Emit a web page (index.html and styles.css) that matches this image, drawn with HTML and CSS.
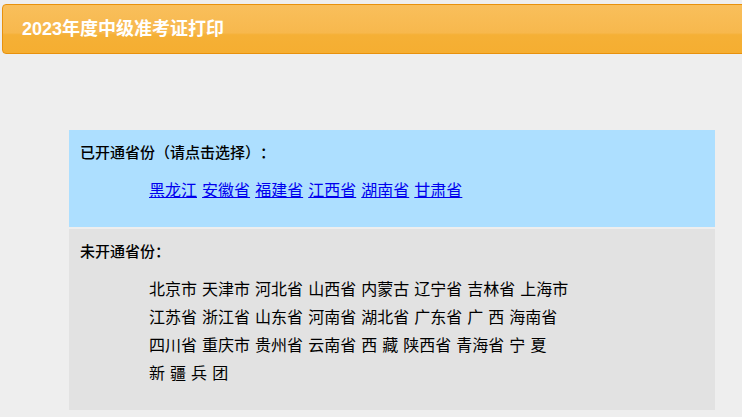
FILE: index.html
```html
<!DOCTYPE html>
<html lang="zh-CN">
<head>
<meta charset="utf-8">
<title>2023年度中级准考证打印</title>
<link rel="stylesheet" href="styles.css">
</head>
<body>
<div class="header"><h1 class="title">2023年度中级准考证打印</h1></div>
<div class="content">
  <div class="box box-open">
    <div class="label">已开通省份（请点击选择）：</div>
    <div class="list"><a href="#">黑龙江</a> <a href="#">安徽省</a> <a href="#">福建省</a> <a href="#">江西省</a> <a href="#">湖南省</a> <a href="#">甘肃省</a></div>
  </div>
  <div class="box box-closed">
    <div class="label">未开通省份：</div>
    <div class="list">北京市 天津市 河北省 山西省 内蒙古 辽宁省 吉林省 上海市<br>江苏省 浙江省 山东省 河南省 湖北省 广东省 广 西 海南省<br>四川省 重庆市 贵州省 云南省 西 藏 陕西省 青海省 宁 夏<br>新 疆 兵 团</div>
  </div>
</div>
</body>
</html>
```
FILE: styles.css
```css
html, body {
  margin: 0;
  padding: 0;
  background: #eeeeee;
  font-family: "Liberation Sans", "Noto Sans CJK SC", sans-serif;
  color: #000;
  overflow: hidden;
  text-spacing-trim: space-all;
}
.header {
  margin: 4px -20px 0 2px;
  height: 48px;
  border: 1px solid #e8910c;
  border-radius: 4px;
  background: linear-gradient(to bottom, #f9bf5b 0%, #f7b84d 58%, #f5b036 62%, #f5ae31 100%);
  display: flex;
  align-items: center;
}
.title {
  margin: 0 0 0 19px;
  font-size: 18px;
  font-weight: bold;
  color: #ffffff;
  line-height: 24px;
}
.content {
  margin: 76px 27px 0 69px;
  display: flex;
  flex-direction: column;
  gap: 2px;
}
.box {
  padding: 12px 11px 22px 11px;
}
.box-open { background: #addfff; }
.box-closed { background: #e2e2e2; }
.label {
  font-size: 15px;
  line-height: 22px;
  font-weight: 500;
}
.list {
  margin-top: 13px;
  padding-left: 69px;
  font-size: 16px;
  line-height: 28px;
  word-spacing: 0.6px;
}
.list a {
  color: #0000ee;
  text-decoration: underline;
}
```
